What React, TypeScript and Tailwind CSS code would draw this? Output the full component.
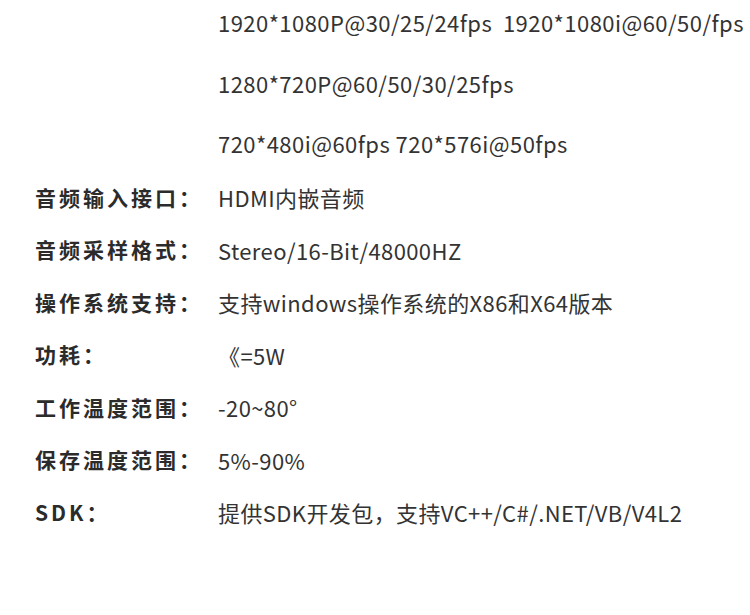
import React from 'react';

const formats = [
  '1920*1080P@30/25/24fps  1920*1080i@60/50/fps',
  '1280*720P@60/50/30/25fps',
  '720*480i@60fps 720*576i@50fps',
];

const specs: [string, string][] = [
  ['音频输入接口：', 'HDMI内嵌音频'],
  ['音频采样格式：', 'Stereo/16-Bit/48000HZ'],
  ['操作系统支持：', '支持windows操作系统的X86和X64版本'],
  ['功耗：', '《=5W'],
  ['工作温度范围：', '-20~80°'],
  ['保存温度范围：', '5%-90%'],
  ['SDK：', '提供SDK开发包，支持VC++/C#/.NET/VB/V4L2'],
];

export default function App() {
  return (
    <div
      className="w-[750px] h-[615px] bg-white overflow-hidden text-[#333] pl-[35px]"
      style={{ fontFamily: '"Noto Sans CJK SC", "Noto Sans", sans-serif' }}
    >
      <div className="flex flex-col gap-[12.5px] pl-[183px] -mt-[2px]">
        {formats.map((f) => (
          <div key={f} className="h-[48px] flex items-center text-[22px] leading-none whitespace-pre tracking-[0.45px]">
            {f}
          </div>
        ))}
      </div>
      <div className="flex flex-col mt-[4px]">
        {specs.map(([label, value]) => (
          <div key={label} className="h-[52.5px] flex items-center">
            <div className="w-[183px] shrink-0 text-[21px] font-bold tracking-[3px] text-[#2b2b2b] leading-none">
              {label}
            </div>
            <div className="text-[22px] leading-none whitespace-nowrap tracking-[0.4px]">{value}</div>
          </div>
        ))}
      </div>
    </div>
  );
}
